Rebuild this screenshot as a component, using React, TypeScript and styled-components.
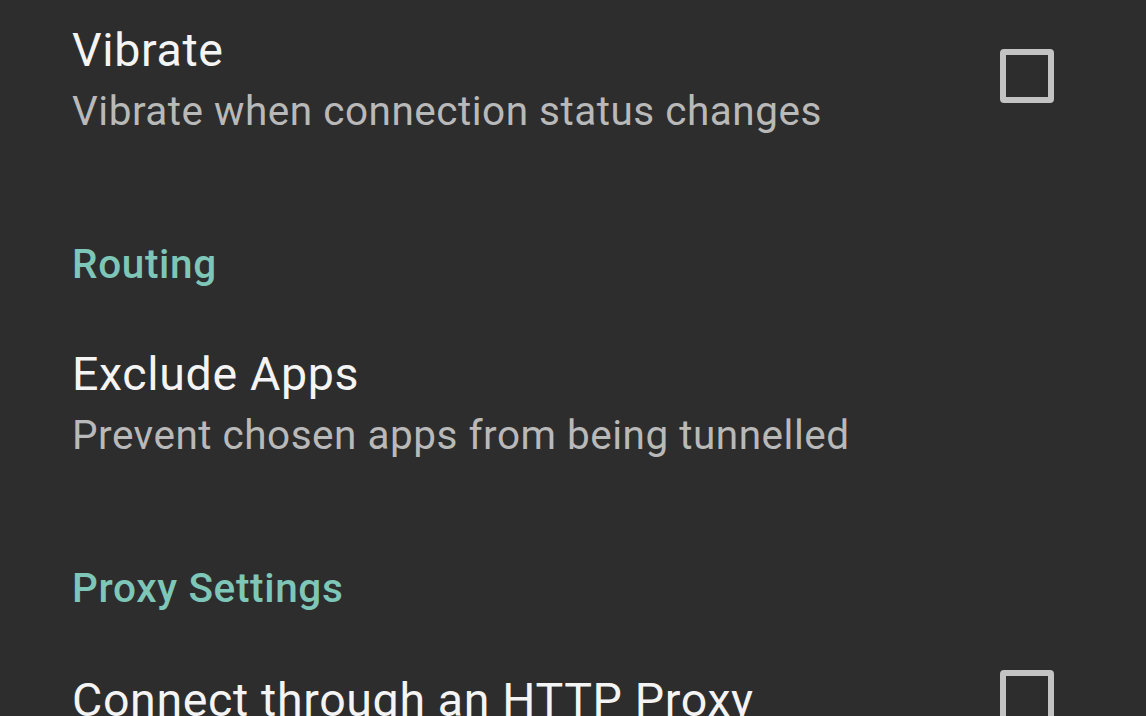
import React from "react";
import styled, { createGlobalStyle } from "styled-components";

const Global = createGlobalStyle`
  html, body {
    margin: 0;
    padding: 0;
    background: #2d2d2d;
  }
  body {
    font-family: Roboto, "Noto Sans", "Liberation Sans", sans-serif;
    -webkit-font-smoothing: antialiased;
  }
`;

const Screen = styled.div`
  width: 100%;
  height: 716px;
  overflow: hidden;
  background: #2d2d2d;
`;

const List = styled.div`
  display: flex;
  flex-direction: column;
  padding: 22px 92px 0 72px;
`;

const Row = styled.div`
  display: flex;
  align-items: center;
  justify-content: space-between;
  gap: 24px;
`;

const TextBlock = styled.div`
  display: flex;
  flex-direction: column;
  gap: 8px;
  min-width: 0;
`;

const Title = styled.div`
  font-size: 46.5px;
  line-height: 56px;
  font-weight: 400;
  color: #f4f4f4;
  letter-spacing: 0.65px;
  white-space: nowrap;
`;

const Summary = styled.div`
  font-size: 40.5px;
  line-height: 50px;
  font-weight: 400;
  color: #b9b9b9;
  letter-spacing: 0.5px;
  white-space: nowrap;
`;

const Category = styled.div`
  padding-top: 103px;
  margin-bottom: 57px;
  font-size: 40.5px;
  line-height: 50px;
  font-weight: 500;
  color: #7ec6b8;
  letter-spacing: 0.65px;
`;

const CheckBox = styled.div<{ $checked?: boolean }>`
  flex: 0 0 auto;
  width: 54px;
  height: 54px;
  box-sizing: border-box;
  border: 6px solid #c3c3c3;
  border-radius: 4px;
  margin-bottom: 6px;
  background: ${(p) => (p.$checked ? "#80cbc4" : "transparent")};
`;

type PrefProps = { title: string; summary?: string; checkbox?: boolean };

const Preference: React.FC<PrefProps> = ({ title, summary, checkbox }) => (
  <Row>
    <TextBlock>
      <Title>{title}</Title>
      {summary && <Summary>{summary}</Summary>}
    </TextBlock>
    {checkbox && <CheckBox />}
  </Row>
);

export default function App() {
  return (
    <Screen>
      <Global />
      <List>
        <Preference
          title="Vibrate"
          summary="Vibrate when connection status changes"
          checkbox
        />
        <Category>Routing</Category>
        <Preference
          title="Exclude Apps"
          summary="Prevent chosen apps from being tunnelled"
        />
        <Category>Proxy Settings</Category>
        <Preference title="Connect through an HTTP Proxy" checkbox />
      </List>
    </Screen>
  );
}
